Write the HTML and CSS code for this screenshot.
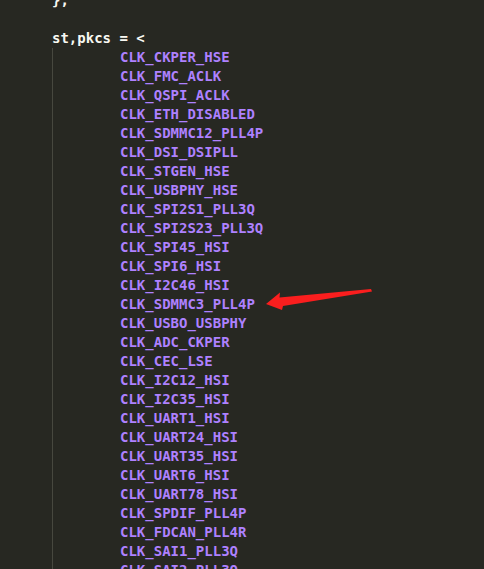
FILE: index.html
```html
<!DOCTYPE html>
<html>
<head>
<meta charset="utf-8">
<link rel="stylesheet" href="styles.css">
</head>
<body>
<div class="editor">
  <div class="code">
    <div class="line">};</div>
    <div class="line"></div>
    <div class="line">st,pkcs = &lt;</div>
    <div class="block">
      <div class="line item">CLK_CKPER_HSE</div>
      <div class="line item">CLK_FMC_ACLK</div>
      <div class="line item">CLK_QSPI_ACLK</div>
      <div class="line item">CLK_ETH_DISABLED</div>
      <div class="line item">CLK_SDMMC12_PLL4P</div>
      <div class="line item">CLK_DSI_DSIPLL</div>
      <div class="line item">CLK_STGEN_HSE</div>
      <div class="line item">CLK_USBPHY_HSE</div>
      <div class="line item">CLK_SPI2S1_PLL3Q</div>
      <div class="line item">CLK_SPI2S23_PLL3Q</div>
      <div class="line item">CLK_SPI45_HSI</div>
      <div class="line item">CLK_SPI6_HSI</div>
      <div class="line item">CLK_I2C46_HSI</div>
      <div class="line item">CLK_SDMMC3_PLL4P</div>
      <div class="line item">CLK_USBO_USBPHY</div>
      <div class="line item">CLK_ADC_CKPER</div>
      <div class="line item">CLK_CEC_LSE</div>
      <div class="line item">CLK_I2C12_HSI</div>
      <div class="line item">CLK_I2C35_HSI</div>
      <div class="line item">CLK_UART1_HSI</div>
      <div class="line item">CLK_UART24_HSI</div>
      <div class="line item">CLK_UART35_HSI</div>
      <div class="line item">CLK_UART6_HSI</div>
      <div class="line item">CLK_UART78_HSI</div>
      <div class="line item">CLK_SPDIF_PLL4P</div>
      <div class="line item">CLK_FDCAN_PLL4R</div>
      <div class="line item">CLK_SAI1_PLL3Q</div>
      <div class="line item">CLK_SAI2_PLL3Q</div>
    </div>
  </div>
  <svg class="arrow" width="484" height="569" viewBox="0 0 484 569">
    <polygon points="266,304 280,292.5 279.5,297.5 371,289 372,291.5 283,306 282,310" fill="#fa1e1e"/>
  </svg>
</div>
</body>
</html>
```
FILE: styles.css
```css
html, body {
  margin: 0;
  padding: 0;
  background: #272822;
  overflow: hidden;
}
.editor {
  position: relative;
  width: 484px;
  height: 569px;
  overflow: hidden;
  background: #272822;
}
.code {
  margin-top: -9.5px;
  padding-left: 52px;
  font-family: "DejaVu Sans Mono", monospace;
  font-weight: bold;
  font-size: 14px;
  line-height: 19px;
  color: #f8f8f2;
}
.line {
  height: 19px;
  white-space: pre;
}
.block {
  border-left: 1px solid #47483f;
  padding-left: 67px;
}
.item {
  color: #ae81ff;
}
.arrow {
  position: absolute;
  left: 0;
  top: 0;
}
```
